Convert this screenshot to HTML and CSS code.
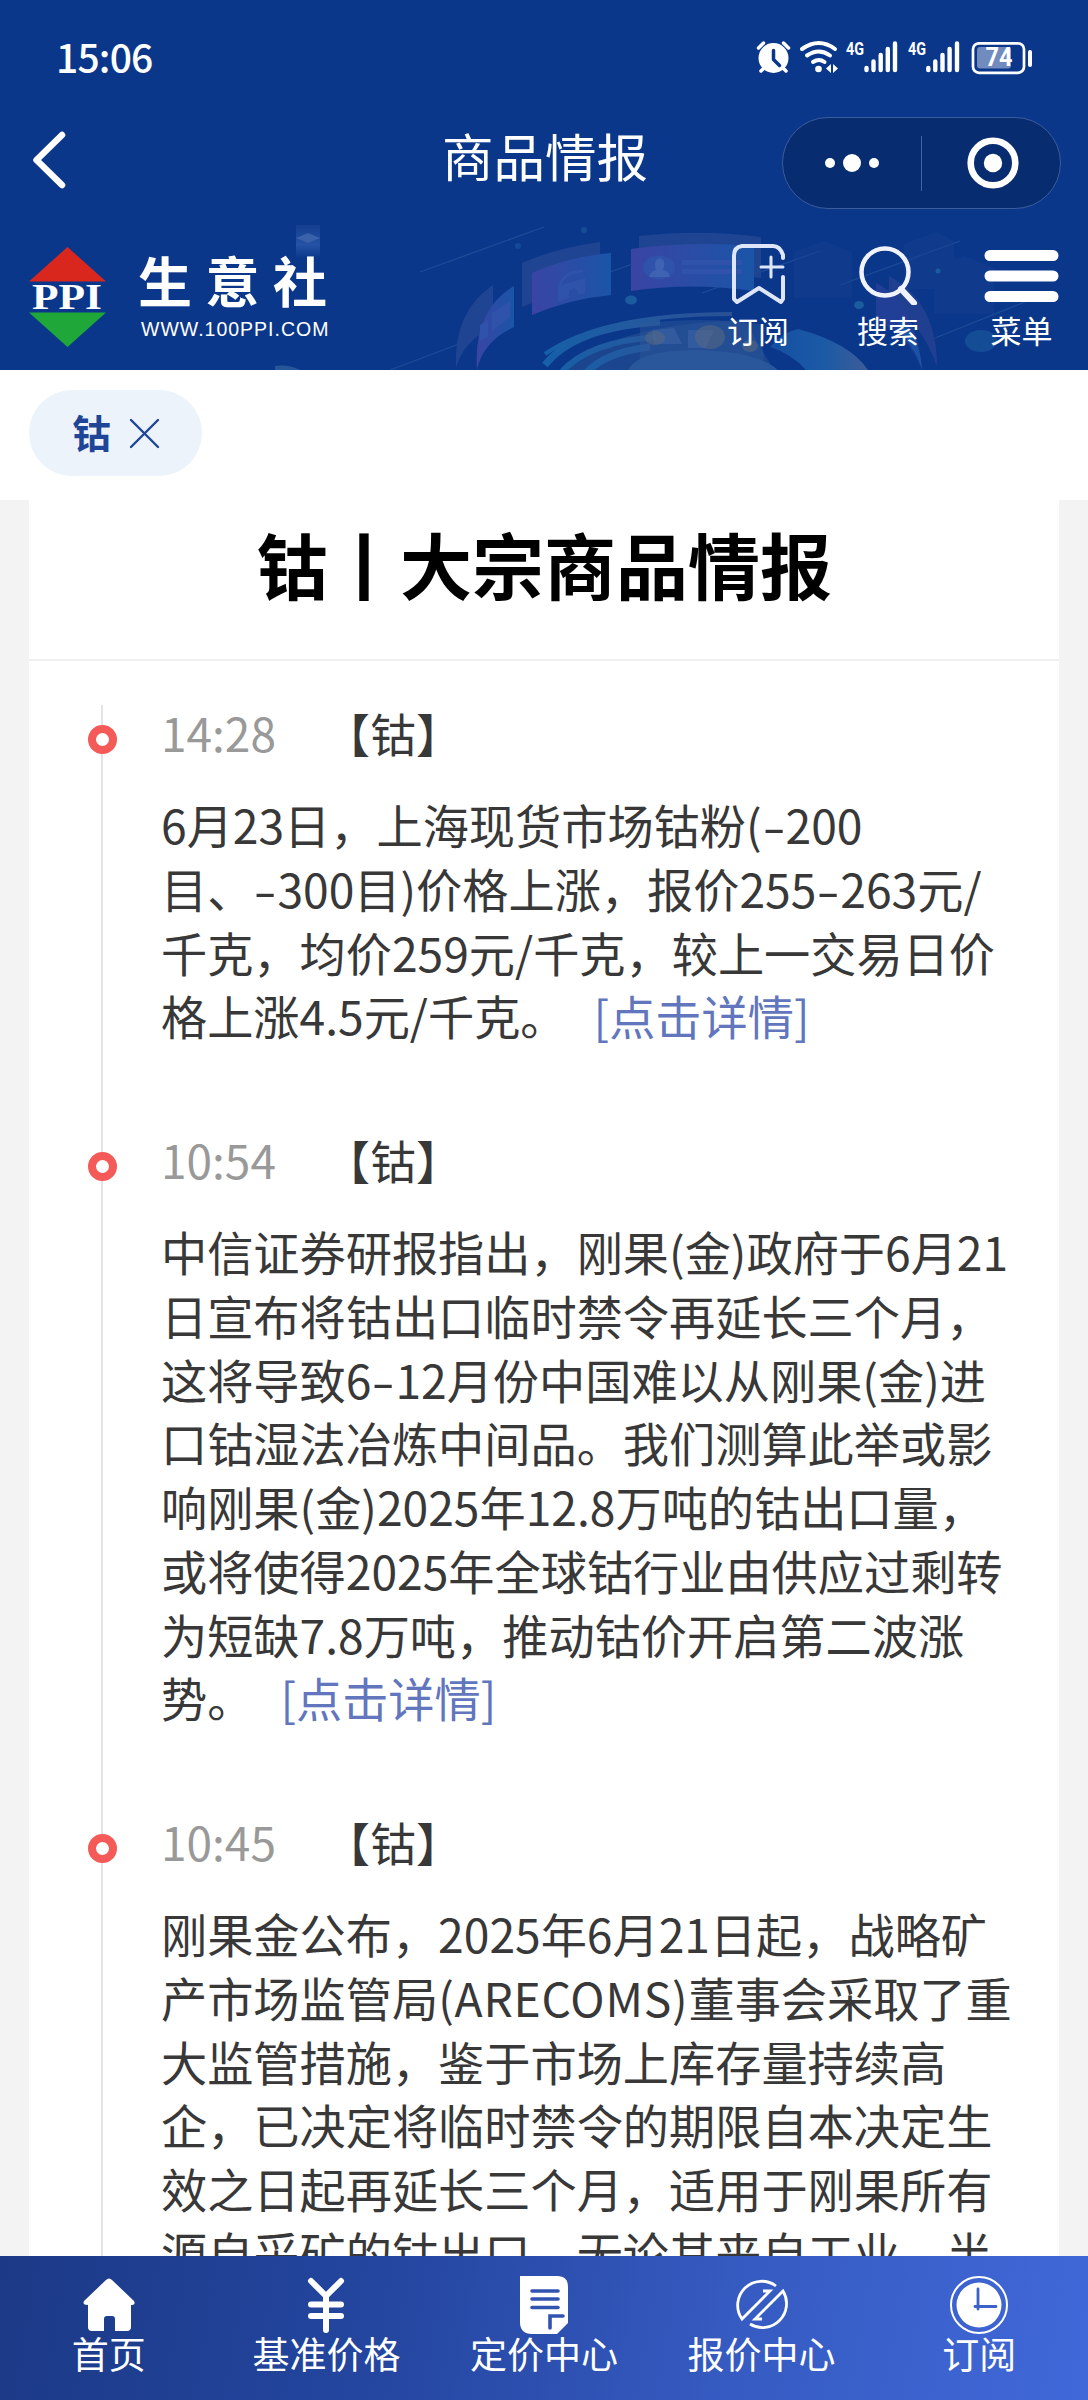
FILE: index.html
```html
<!DOCTYPE html>
<html lang="zh-CN">
<head>
    <meta charset="UTF-8">
    <meta name="viewport" content="width=device-width, initial-scale=1.0">
    <title>商品情报</title>
    <link rel="stylesheet" href="styles.css">
</head>
<body>
    <div class="page">
        <header class="top">
            <div class="status-bar">
                <span class="clock">15:06</span>
                <svg class="status-icons" width="270" height="40" viewBox="0 0 270 40">
                    <!-- alarm -->
                    <circle cx="17.5" cy="20" r="15" fill="#fff"/>
                    <path d="M2.5 10l5-5M32.500 10l-5-5M5 33l4-4M30 33l-4-4" stroke="#fff" stroke-width="3.500" stroke-linecap="round"/>
                    <path d="M17.500 12.500v9l6 6" fill="none" stroke="#0b378b" stroke-width="3.500" stroke-linecap="round" stroke-linejoin="round"/>
                    <!-- wifi -->
                    <g fill="none" stroke="#fff" stroke-width="4" stroke-linecap="round">
                        <path d="M46 11q17-12 33 0M51 17.500q12-8 23 0M57 24q6-4 11.500 0"/>
                    </g>
                    <circle cx="62.500" cy="31" r="3.300" fill="#fff"/>
                    <path d="M75 26v9l-5-4.500zM77 26l5 4.500-5 4.500z" fill="#fff"/>
                    <!-- signal -->
                    <text class="net" x="90" y="17" textLength="18" lengthAdjust="spacingAndGlyphs">4G</text>
                    <path d="M110.500 30v2M117.500 23.500v8.500M124.700 17v15M131.800 11v21M139 5.500v26.500" stroke="#fff" stroke-width="4.400" stroke-linecap="round"/>
                    <text class="net" x="152" y="17" textLength="18" lengthAdjust="spacingAndGlyphs">4G</text>
                    <path d="M172.300 30v2M179.300 23.500v8.500M186.500 17v15M193.600 11v21M201 5.500v26.500" stroke="#fff" stroke-width="4.400" stroke-linecap="round"/>
                    <!-- battery -->
                    <rect x="217" y="5.300" width="51" height="29.500" rx="6" fill="none" stroke="#fff" stroke-width="2.700"/>
                    <rect x="221" y="9" width="34" height="21.500" rx="3" fill="#718bbf"/>
                    <text class="battery" x="229.500" y="28" textLength="27" lengthAdjust="spacingAndGlyphs">74</text>
                </svg>
                <i class="battery-cap"></i>
            </div>

            <div class="nav-bar">
                <svg class="back" width="40" height="60" viewBox="0 0 40 60">
                    <path d="M33 5L7.500 30 33 55" fill="none" stroke="#fff" stroke-width="6.500" stroke-linecap="round" stroke-linejoin="round"/>
                </svg>
                <h1 class="nav-title">商品情报</h1>
                <div class="capsule">
                    <svg width="46" height="20" viewBox="0 0 46 20" fill="#fff">
                        <circle cx="1" cy="10" r="5"/>
                        <circle cx="23" cy="10" r="9"/>
                        <circle cx="45" cy="10" r="5"/>
                    </svg>
                    <i class="capsule-line"></i>
                    <svg width="52" height="52" viewBox="0 0 52 52">
                        <circle cx="26" cy="26" r="22.300" fill="none" stroke="#fff" stroke-width="6.600"/>
                        <circle cx="26" cy="26" r="9.200" fill="#fff"/>
                    </svg>
                </div>
            </div>

            <div class="banner">
                <svg class="banner-art" width="1088" height="160" viewBox="0 210 1088 160">
                    <defs>
                        <linearGradient id="panel"><stop offset="0" stop-color="#3a44a3"/><stop offset="1" stop-color="#1a55a8"/></linearGradient>
                        <linearGradient id="ring" gradientUnits="userSpaceOnUse" x1="545" x2="735"><stop offset="0" stop-color="#1560a8"/><stop offset=".5" stop-color="#24599f"/><stop offset="1" stop-color="#2b4f93"/></linearGradient>
                        <linearGradient id="swath"><stop offset="0" stop-color="#154fa2"/><stop offset=".55" stop-color="#1b5aa6"/><stop offset="1" stop-color="#3c5c98"/></linearGradient>
                        <linearGradient id="box" x2="0" y2="1"><stop offset="0" stop-color="#143f91"/><stop offset=".6" stop-color="#2552a4"/><stop offset="1" stop-color="#0b378b"/></linearGradient>
                    </defs>
                    <path d="M296 225h24v33h-24z" fill="url(#box)"/>
                    <path d="M308 233l12 5-12 5-12-5z" fill="#3a61ab"/>
                    <path d="M420 272l124-45M390 370l77-29M610 272l25-9M702 293l118-42M840 285l120-44M935 338l90-36" stroke="#20529a" stroke-width="1.300" opacity=".8"/>
                    <g fill="#1f4592">
                        <path d="M456 368Q453 312 493 285v42q-30 14-37 41z"/>
                        <path d="M522 263q34-15 78-21v45q-42 4-78 20z"/>
                        <path d="M639 236q61-7 122 1v41q-60-8-122 0z"/>
                    </g>
                    <g fill="url(#panel)">
                        <path d="M477 370q-4-60 37-84v41q-31 14-37 43z"/>
                        <path d="M532 273q35-16 79-20v42q-42 4-79 20z"/>
                        <path d="M631 249q60-8 123-3v45q-63-9-123 0z"/>
                    </g>
                    <g fill="#2f52aa">
                        <path d="M492 313l18-12v16l-18 14zM480 325l8-5v16l-8 5z"/>
                        <path d="M558 286l27-8v15l-7 2q-1-8-6-6-4 2-3 9l-11 4z"/>
                        <ellipse cx="659" cy="267.500" rx="16" ry="12"/>
                        <path d="M682 260h60v5h-60zM682 269h60v5h-60z"/>
                    </g>
                    <path d="M560 286q2-13 23-15" fill="none" stroke="#2f52aa" stroke-width="3"/>
                    <path d="M649 277q2-6 7-7-3-9 3-12 8 1 4 12 6 1 7 7z" fill="#4062b2"/>

                    <!-- podium rings -->
                    <path d="M564 370q50-46 180-50l30 50z" fill="#1b468f"/>
                    <g fill="none" stroke="url(#ring)">
                        <path d="M545 354q58-40 187-40" stroke-width="4"/>
                        <path d="M545 365q30-38 115-43" stroke-width="7"/>
                        <path d="M560 374q26-32 96-37" stroke-width="6"/>
                        <path d="M585 374q20-22 65-27" stroke-width="7"/>
                    </g>
                    <path d="M640 324q60-8 120 0l4 36-14 10H640z" fill="#31599a" opacity=".4"/>
                    <path d="M628 370q10-20 70-20 60 2 80 20z" fill="#2a579b"/>
                    <path d="M652 330l22-2 8 16h-28zM688 330h26l-8 18h-18z" fill="#3f68aa" opacity=".5"/>
                    <g fill="#5d6a80" opacity=".5">
                        <ellipse cx="655" cy="338" rx="10" ry="7"/>
                        <ellipse cx="710" cy="337" rx="15" ry="12"/>
                        <ellipse cx="750" cy="346" rx="8" ry="6"/>
                    </g>
                    <path d="M770 347q14-16 28-18 52 14 70 41h-62q-14-16-36-23z" fill="url(#swath)"/>
                    <path d="M275 370v-4q14-2 25 4z" fill="#285699"/>

                    <!-- far blocks -->
                    <g fill="#153f90" opacity=".5">
                        <path d="M794 252l30-11 28 11v46h-58zM904 244l32-12 18 9v48h-50zM934 268l30-12 30 12v46h-60z"/>
                    </g>
                    <path d="M889 276q48 26 48 90-18-48-48-62z" fill="#203f91"/>
                    <path d="M876 283q40 20 46 87-12-34-46-50z" fill="#223f97"/>
                    <path d="M900 318q20 18 22 52-8-26-24-38z" fill="#1a53a6"/>
                    <g fill="#1b5c9f">
                        <circle cx="584" cy="230" r="3" opacity=".6"/>
                        <ellipse cx="631" cy="300" rx="6" ry="4.500"/>
                        <ellipse cx="859" cy="305" rx="5" ry="4"/>
                        <circle cx="938" cy="271" r="2.500"/>
                        <circle cx="518" cy="246" r="3" opacity=".5"/>
                        <ellipse cx="981" cy="341" rx="16" ry="11" opacity=".6"/>
                    </g>
                </svg>

                <div class="logo">
                    <svg width="78" height="102" viewBox="0 0 78 102">
                        <path d="M38.500 1L77 35.500H0z" fill="#d9271d"/>
                        <path d="M0 66.500h77L38.500 101z" fill="#1fa839"/>
                        <text class="logo-mark" x="3" y="62.500" textLength="70" lengthAdjust="spacingAndGlyphs">PPI</text>
                    </svg>
                    <div class="logo-text">
                        <strong>生意社</strong>
                        <span>WWW.100PPI.COM</span>
                    </div>
                </div>

                <div class="tools">
                    <a class="tool">
                        <svg width="56" height="62" viewBox="0 0 56 62" fill="none" stroke="#dfe6fa" stroke-width="4" stroke-linecap="round" stroke-linejoin="round">
                            <path d="M53 15v-3q-3-9-10-9H12Q4 4 4 13v43l3 3 22-14 22 14 2-3V34"/>
                            <path d="M41 14v20M31 24h22" stroke-width="3"/>
                        </svg>
                        <span>订阅</span>
                    </a>
                    <a class="tool">
                        <svg width="62" height="62" viewBox="0 0 62 62" fill="none" stroke="#f0f3fd" stroke-linecap="round">
                            <circle cx="28" cy="29" r="23.500" stroke-width="4.500"/>
                            <path d="M44 46l13 14" stroke-width="6"/>
                        </svg>
                        <span>搜索</span>
                    </a>
                    <a class="tool">
                        <svg width="75" height="62" viewBox="0 0 75 62" stroke="#fff" stroke-width="11" stroke-linecap="round">
                            <path d="M6 12.500h63M6 33h63M6 53.500h63"/>
                        </svg>
                        <span>菜单</span>
                    </a>
                </div>
            </div>
        </header>

        <div class="filter">
            <div class="chip">
                <span>钴</span>
                <svg width="31" height="31" viewBox="0 0 31 31">
                    <path d="M2 2l27 27M29 2L2 29" stroke="#1f4596" stroke-width="2.400" stroke-linecap="round"/>
                </svg>
            </div>
        </div>

        <main class="card">
            <h2 class="card-title">钴丨大宗商品情报</h2>
            <div class="timeline">
                <section class="item">
                    <div class="item-head"><i class="dot"></i><time>14:28</time><span>【钴】</span></div>
                    <p>6月23日，上海现货市场钴粉(<b>-</b>200<br>目、<b>-</b>300目)价格上涨，报价255<b>-</b>263元/<br>千克，均价259元/千克，较上一交易日价<br>格上涨4.5元/千克。<a>[点击详情]</a></p>
                </section>
                <section class="item">
                    <div class="item-head"><i class="dot"></i><time>10:54</time><span>【钴】</span></div>
                    <p>中信证券研报指出，刚果(金)政府于6月21<br>日宣布将钴出口临时禁令再延长三个月，<br>这将导致6<b>-</b>12月份中国难以从刚果(金)进<br>口钴湿法冶炼中间品。我们测算此举或影<br>响刚果(金)2025年12.8万吨的钴出口量，<br>或将使得2025年全球钴行业由供应过剩转<br>为短缺7.8万吨，推动钴价开启第二波涨<br>势。<a>[点击详情]</a></p>
                </section>
                <section class="item">
                    <div class="item-head"><i class="dot"></i><time>10:45</time><span>【钴】</span></div>
                    <p>刚果金公布，2025年6月21日起，战略矿<br>产市场监管局<span class="latin">(ARECOMS)</span>董事会采取了重<br>大监管措施，鉴于市场上库存量持续高<br>企，已决定将临时禁令的期限自本决定生<br>效之日起再延长三个月，适用于刚果所有<br>源自采矿的钴出口，无论其来自工业、半</p>
                </section>
            </div>
        </main>

        <nav class="tab-bar">
            <a class="tab">
                <svg width="60" height="60" viewBox="0 0 60 60" fill="#fff">
                    <path d="M27 5q3-3 6 0l22 21q2 4-3 4v22q0 4-4 4H36V44q0-3-3-3h-5q-3 0-3 3v12H13q-4 0-4-4V30q-6 0-4-4z"/>
                </svg>
                <span>首页</span>
            </a>
            <a class="tab">
                <svg width="60" height="60" viewBox="0 0 60 60" fill="none" stroke="#fff" stroke-width="6" stroke-linecap="round" stroke-linejoin="round">
                    <path d="M15 6l15 15L45 6M30 21v34M15 29.500h30M15 41h30"/>
                </svg>
                <span>基准价格</span>
            </a>
            <a class="tab">
                <svg width="60" height="60" viewBox="0 0 60 60">
                    <path d="M6 1h37q11 0 11 11v36L43 59H18Q6 59 6 47z" fill="#fff"/>
                    <path d="M18 16h26M18 24h26M18 32.500h26M36 53V41h13" fill="none" stroke="#3054b0" stroke-width="3.600" stroke-linecap="round"/>
                </svg>
                <span>定价中心</span>
            </a>
            <a class="tab">
                <svg width="60" height="60" viewBox="0 0 60 60" fill="none" stroke="#fff" stroke-width="2.800">
                    <path d="M44 11A24 24 0 0 0 10 44L38 16h-7M18 49A24 24 0 0 0 51 16L23 44h7"/>
                </svg>
                <span>报价中心</span>
            </a>
            <a class="tab">
                <svg width="60" height="60" viewBox="0 0 60 60">
                    <circle cx="30" cy="30" r="28" fill="none" stroke="#fff" stroke-width="2"/>
                    <circle cx="30" cy="30" r="22.500" fill="#fff"/>
                    <path d="M29 14v20M26 31.500h21" stroke="#3b62c8" stroke-width="2.800" stroke-linecap="round"/>
                </svg>
                <span>订阅</span>
            </a>
        </nav>
    </div>
</body>
</html>
```
FILE: styles.css
```css
body {
    margin: 0;
    font-family: "Noto Sans CJK SC", sans-serif;
    background-color: #f3f3f3;
    color: #383838;
}

.page {
    height: 2400px;
    display: flex;
    flex-direction: column;
    overflow: hidden;
}

.top {
    flex: none;
    height: 370px;
    background: #0b378b;
    color: #fff;
}

.status-bar {
    display: flex;
    align-items: center;
    height: 116px;
    padding: 0 56px 0 56px;
}

.clock {
    margin-top: -5px;
    font-size: 39px;
    font-weight: 500;
    letter-spacing: -0.8px;
    line-height: 116px;
}

.status-icons {
    margin-left: auto;
    overflow: visible;
}

.net {
    font: bold 19px Roboto, sans-serif;
    fill: #fff;
}

.battery {
    font: bold 25px Roboto, sans-serif;
    fill: #fff;
}

.battery-cap {
    width: 4px;
    height: 17px;
    margin: 0 0 0 2px;
    border-radius: 2px;
    background: #fff;
}

.nav-bar {
    display: grid;
    grid-template-columns: 1fr auto 1fr;
    align-items: center;
    height: 94px;
    padding: 0 27px 0 29px;
}

.nav-title {
    margin: -16px 0 0;
    font-size: 51.500px;
    font-weight: 400;
    line-height: 74px;
}

.back {
    margin-top: -6px;
}

.capsule {
    justify-self: end;
    display: flex;
    align-items: center;
    justify-content: space-between;
    box-sizing: border-box;
    width: 279px;
    height: 92px;
    padding: 0 41px 0 46px;
    border: 1px solid #3b5c9b;
    border-radius: 46px;
    background: #082c70;
}

.capsule svg {
    overflow: visible;
}

.capsule-line {
    width: 1px;
    height: 55px;
    background: #44639b;
}

.banner {
    position: relative;
    display: flex;
    justify-content: space-between;
    height: 160px;
    padding: 0 29px;
}

.banner-art {
    position: absolute;
    top: 0;
    left: 0;
}

.logo {
    position: relative;
    display: flex;
    padding-top: 36px;
}

.logo-mark {
    font: bold 35px "Liberation Serif", serif;
    fill: #fff;
}

.logo-text {
    display: flex;
    flex-direction: column;
    margin-left: 31px;
}

.logo-text strong {
    font-size: 54px;
    line-height: 68px;
    letter-spacing: 13.500px;
}

.logo-text span {
    margin: 3px 0 0 3px;
    font-family: "Liberation Sans", sans-serif;
    font-size: 19.500px;
    line-height: 24px;
    letter-spacing: 1px;
}

.tools {
    position: relative;
    display: flex;
    padding-top: 33px;
}

.tool {
    display: flex;
    flex-direction: column;
    align-items: center;
}

.tool:nth-child(1) {
    margin-right: 68px;
}

.tool:nth-child(2) {
    margin-right: 65px;
}

.tool span {
    font-size: 31px;
    line-height: 45px;
    margin-top: 2px;
}

.filter {
    flex: none;
    height: 130px;
    box-sizing: border-box;
    padding: 20px 29px;
    background: #fff;
}

.chip {
    display: flex;
    align-items: center;
    box-sizing: border-box;
    width: 173px;
    height: 86px;
    padding-left: 43px;
    border-radius: 43px;
    background: #edf3fb;
    color: #1f4596;
    font-size: 39px;
    font-weight: 700;
}

.chip span {
    margin-top: -5px;
}

.chip svg {
    margin-left: 18px;
}

.card {
    flex: 1;
    min-height: 0;
    margin: 0 29px;
    background: #fff;
    overflow: hidden;
}

.card-title {
    margin: 0;
    height: 159px;
    border-bottom: 2px solid #eee;
    color: #000;
    font-size: 72px;
    font-weight: 700;
    line-height: 126px;
    text-align: center;
}

.timeline {
    margin: 44px 0 0 72px;
    border-left: 2px solid #e1e5e7;
}

.item {
    padding: 0 0 82px 58px;
}

.item-head {
    position: relative;
    display: flex;
    height: 59px;
    margin-bottom: 28px;
    font-size: 46px;
    line-height: 54px;
}

.item-head time {
    width: 163px;
    color: #999;
}

.dot {
    position: absolute;
    top: 20px;
    left: -73px;
    box-sizing: border-box;
    width: 29px;
    height: 29px;
    border: 8px solid #f45a57;
    border-radius: 50%;
    background: #fff;
}

.item p {
    margin: 0 0 3px;
    font-size: 46.200px;
    line-height: 63.750px;
    white-space: nowrap;
}

.item b {
    display: inline-block;
    width: 24px;
    font-weight: 400;
    text-align: center;
    transform: scaleX(1.450);
}

.latin {
    letter-spacing: 0.8px;
}

.item a {
    margin-left: 27px;
    color: #6276bd;
}

.tab-bar {
    flex: none;
    display: flex;
    height: 144px;
    background: linear-gradient(100deg, #1b3986 0%, #2446a0 35%, #365bc2 68%, #4068d8 100%);
    color: #fff;
}

.tab {
    flex: 1;
    display: flex;
    flex-direction: column;
    align-items: center;
    padding-top: 19px;
}

.tab span {
    font-size: 37px;
    line-height: 36px;
}
```
